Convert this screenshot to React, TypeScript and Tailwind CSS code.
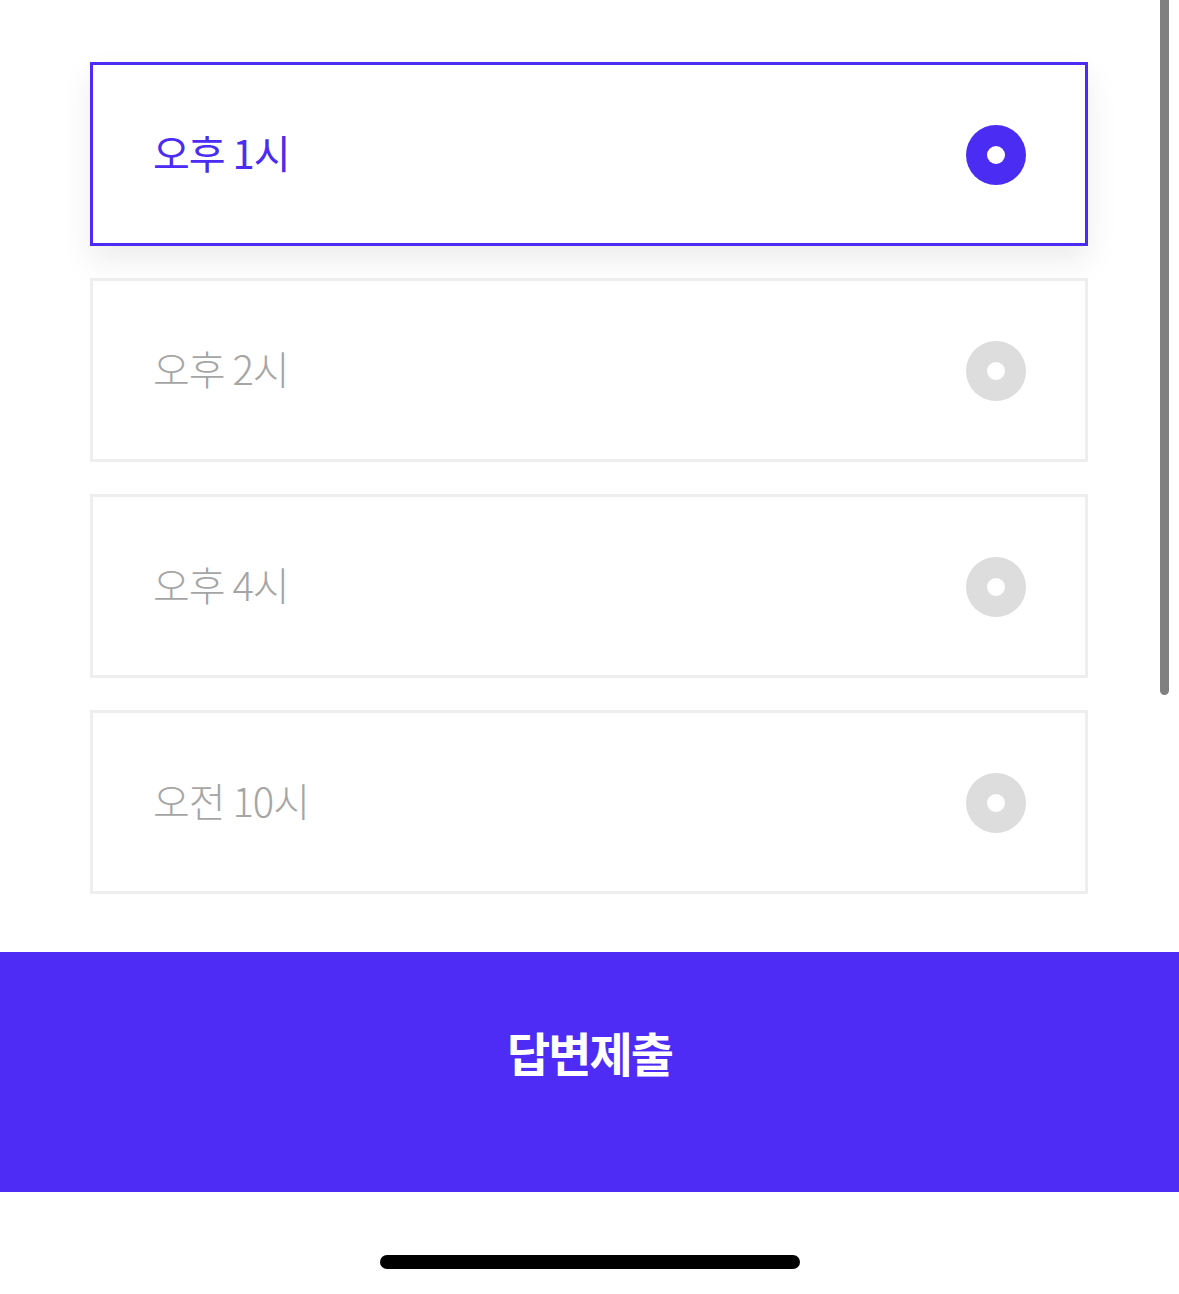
import React from "react";

const options = [
  { label: "오후 1시", selected: true },
  { label: "오후 2시", selected: false },
  { label: "오후 4시", selected: false },
  { label: "오전 10시", selected: false },
];

export default function App() {
  return (
    <div
      className="relative w-[1179px] h-[1294px] bg-white overflow-hidden flex flex-col"
      style={{ fontFamily: '"Noto Sans CJK KR", "Noto Sans", sans-serif' }}
    >
      <div className="flex flex-col gap-[32px] pl-[90px] pr-[91px] pt-[62px]">
        {options.map((o) =>
          o.selected ? (
            <div
              key={o.label}
              className="h-[184px] border-[3px] border-[#4b2cf2] bg-white flex items-center justify-between pl-[60px] pr-[59px] pt-[2px] shadow-[0_14px_30px_rgba(0,0,0,0.08)]"
            >
              <span className="text-[40px] leading-none text-[#4b2cf2] tracking-[-1px] -mt-[6px]">{o.label}</span>
              <span className="w-[60px] h-[60px] rounded-full bg-[#4b2cf2] flex items-center justify-center">
                <span className="w-[18px] h-[18px] rounded-full bg-white" />
              </span>
            </div>
          ) : (
            <div
              key={o.label}
              className="h-[184px] border-[3px] border-[#eeeeee] bg-white flex items-center justify-between pl-[60px] pr-[59px] pt-[2px]"
            >
              <span className="text-[40px] leading-none text-[#a5a5a5] font-light tracking-[-1px] -mt-[6px]">{o.label}</span>
              <span className="w-[60px] h-[60px] rounded-full bg-[#dddddd] flex items-center justify-center">
                <span className="w-[18px] h-[18px] rounded-full bg-white" />
              </span>
            </div>
          )
        )}
      </div>
      <div className="mt-[58px] h-[240px] bg-[#4f2cf5] flex justify-center items-start pt-[76px]">
        <span className="text-[47px] font-bold text-white tracking-[-2px] leading-none">답변제출</span>
      </div>
      <div className="flex-1 flex justify-center pt-[63px]">
        <div className="w-[420px] h-[14px] rounded-full bg-black" />
      </div>
      <div className="absolute right-[10px] top-0 w-[9px] h-[695px] rounded-b-full bg-[#808080]" />
    </div>
  );
}
